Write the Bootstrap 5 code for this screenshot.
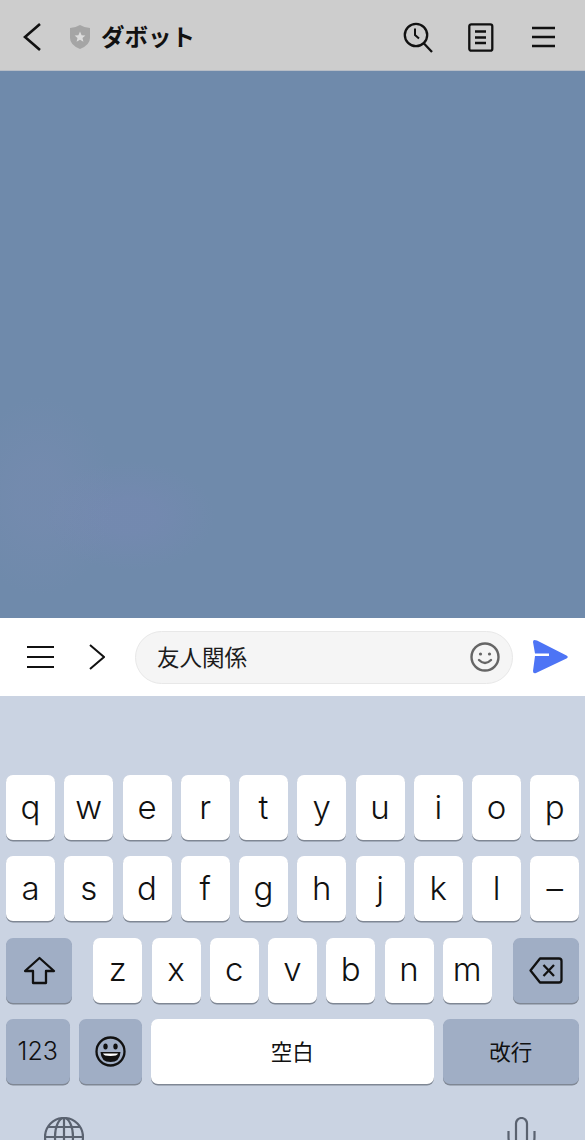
<!DOCTYPE html>
<html lang="ja">
<head>
<meta charset="UTF-8">
<meta name="viewport" content="width=device-width, initial-scale=1.0">
<title>ダボット</title>
<link rel="stylesheet" href="https://cdn.jsdelivr.net/npm/bootstrap@5.3.1/dist/css/bootstrap.min.css">
<style>
    html, body { height: 1140px; overflow: hidden; }
    body { font-family: "Noto Sans CJK JP", "Liberation Sans", sans-serif; background: #cad3e2; color: #111; }
    .top-bar { height: 71px; background: #cdcdcd; border-bottom: 1px solid #b7bdc6; padding: 4px 30px 0 21px; }
    .chat-title { font-size: 23.5px; font-weight: 700; line-height: 1; margin-left: 10px; color: #111; }
    .chat-area {
        height: 547px;
        background-color: #6f8aab;
        background-image:
            radial-gradient(ellipse 75px 100px at 40px 425px, rgba(125,140,180,.3) 30%, transparent 100%),
            radial-gradient(ellipse 85px 55px at 130px 445px, rgba(125,135,185,.3) 30%, transparent 100%);
    }
    .input-bar { height: 78px; background: #fff; padding: 0 17px 0 27px; }
    .msg-box { width: 378px; height: 53px; margin-left: 30px; padding: 0 12px 0 21px; background: #f5f5f5; border: 1px solid #e8e8e8; border-radius: 27px; font-size: 22.5px; color: #1c1c1c; }
    .keyboard { padding: 79px 6px 0; height: 444px; }
    .key-row { height: 65px; margin-bottom: 16.33px; gap: 9.25px; }
    .kb-key { height: 65px; width: 49px; flex: none; border-radius: 7px; background: #fff; box-shadow: 0 1.5px 0 #7f8794; font-family: Inter, "Liberation Sans", sans-serif; font-size: 33px; font-weight: 300; color: #111; }
    .kb-key.alt { background: #a0aec5; }
    .kb-key.shift { width: 66px; margin-right: 12px; }
    .kb-key.del { width: 66px; margin-left: 11.5px; }
    .kb-key.num { width: 63.5px; font-size: 25px; }
    .kb-key.emo { width: 63px; }
    .kb-key.space { width: 282.500px; font-family: "Noto Sans CJK JP", sans-serif; font-size: 21.5px; font-weight: 400; }
    .kb-key.ret { width: 136px; font-family: "Noto Sans CJK JP", sans-serif; font-size: 21.5px; font-weight: 400; }
    .kb-bottom { padding: 17px 43px 0 38px; }
</style>
</head>
<body>
<div class="top-bar d-flex align-items-center">
    <svg width="24" height="30" viewBox="0 0 24 30" fill="none" stroke="#111" stroke-width="2.6"><path d="M19 2 L4 15 L19 28"/></svg>
    <svg class="ms-4" width="22" height="26" viewBox="0 0 22 26"><path d="M1 4 Q6 4 11 1 Q16 4 21 4 V14 Q21 21 11 25 Q1 21 1 14Z" fill="#a5a5a5"/><path d="M11 7.5 L12.6 11.2 L16.4 11.5 L13.5 14 L14.4 17.8 L11 15.8 L7.6 17.8 L8.5 14 L5.6 11.5 L9.4 11.2Z" fill="#dcdcdc"/></svg>
    <span class="chat-title">ダボット</span>
    <div class="ms-auto d-flex align-items-center">
        <svg width="30" height="31" viewBox="0 0 30 31" fill="none" stroke="#111" stroke-width="2.3"><circle cx="13" cy="13" r="11.2"/><path d="M20.5 21 L29 30"/><path d="M12 6.5 V13 L16 16.5" stroke-width="2"/></svg>
        <svg style="margin-left:35px" width="26" height="29" viewBox="0 0 26 29" fill="none" stroke="#111" stroke-width="2.3"><rect x="1.3" y="1.3" width="23" height="26.4" rx="2"/><path d="M7 8.5 H18 M7 14.5 H18 M7 20 H18"/></svg>
        <svg style="margin-left:37px" width="24" height="22" viewBox="0 0 24 22" fill="none" stroke="#111" stroke-width="2.6"><path d="M1 2 H24 M1 11 H24 M1 20 H24"/></svg>
    </div>
</div>

<div class="chat-area"></div>

<div class="input-bar d-flex align-items-center">
    <svg width="27" height="24" viewBox="0 0 27 24" fill="none" stroke="#111" stroke-width="2.2"><path d="M0 2 H27 M0 12 H27 M0 22 H27"/></svg>
    <svg style="margin-left:35px" width="16" height="26" viewBox="0 0 16 26" fill="none" stroke="#111" stroke-width="2"><path d="M1 1 L15 13 L1 25"/></svg>
    <div class="msg-box d-flex align-items-center justify-content-between">
        <span>友人関係</span>
        <svg width="30" height="30" viewBox="0 0 30 30" fill="none" stroke="#666" stroke-width="2.4"><circle cx="15" cy="15" r="13.5"/><path d="M9 18 Q15 24 21 18" stroke-linecap="round"/><circle cx="10.5" cy="12" r="1.6" fill="#666" stroke="none"/><circle cx="19.5" cy="12" r="1.6" fill="#666" stroke="none"/></svg>
    </div>
    <svg class="ms-auto" width="36" height="36" viewBox="0 0 36 36"><path d="M2.5 1 Q1 1 1 3 L3 14.5 H17 V17 H3 L1 32 Q1 35 4 34 L34.500 19.500 Q37 18 34.500 16.500 L5 1.500 Q3.500 1 2.500 1Z" fill="#4d74f5"/></svg>
</div>

<div class="keyboard">
    <div class="key-row d-flex">
        <div class="kb-key d-flex align-items-center justify-content-center">q</div>
        <div class="kb-key d-flex align-items-center justify-content-center">w</div>
        <div class="kb-key d-flex align-items-center justify-content-center">e</div>
        <div class="kb-key d-flex align-items-center justify-content-center">r</div>
        <div class="kb-key d-flex align-items-center justify-content-center">t</div>
        <div class="kb-key d-flex align-items-center justify-content-center">y</div>
        <div class="kb-key d-flex align-items-center justify-content-center">u</div>
        <div class="kb-key d-flex align-items-center justify-content-center">i</div>
        <div class="kb-key d-flex align-items-center justify-content-center">o</div>
        <div class="kb-key d-flex align-items-center justify-content-center">p</div>
    </div>
    <div class="key-row d-flex">
        <div class="kb-key d-flex align-items-center justify-content-center">a</div>
        <div class="kb-key d-flex align-items-center justify-content-center">s</div>
        <div class="kb-key d-flex align-items-center justify-content-center">d</div>
        <div class="kb-key d-flex align-items-center justify-content-center">f</div>
        <div class="kb-key d-flex align-items-center justify-content-center">g</div>
        <div class="kb-key d-flex align-items-center justify-content-center">h</div>
        <div class="kb-key d-flex align-items-center justify-content-center">j</div>
        <div class="kb-key d-flex align-items-center justify-content-center">k</div>
        <div class="kb-key d-flex align-items-center justify-content-center">l</div>
        <div class="kb-key d-flex align-items-center justify-content-center">–</div>
    </div>
    <div class="key-row d-flex">
        <div class="kb-key alt shift d-flex align-items-center justify-content-center">
            <svg width="33" height="29" viewBox="0 0 33 29" fill="none" stroke="#111" stroke-width="2.300" stroke-linejoin="round"><path d="M16.500 2 L31 15 H23 V27 H10 V15 H2Z"/></svg>
        </div>
        <div class="kb-key d-flex align-items-center justify-content-center">z</div>
        <div class="kb-key d-flex align-items-center justify-content-center">x</div>
        <div class="kb-key d-flex align-items-center justify-content-center">c</div>
        <div class="kb-key d-flex align-items-center justify-content-center">v</div>
        <div class="kb-key d-flex align-items-center justify-content-center">b</div>
        <div class="kb-key d-flex align-items-center justify-content-center">n</div>
        <div class="kb-key d-flex align-items-center justify-content-center">m</div>
        <div class="kb-key alt del d-flex align-items-center justify-content-center">
            <svg width="34" height="27" viewBox="0 0 34 27" fill="none" stroke="#111" stroke-width="2.300" stroke-linejoin="round"><path d="M11 1.500 H30 Q32.500 1.500 32.500 4 V23 Q32.500 25.500 30 25.500 H11 L1.500 13.500Z"/><path d="M14.500 8 L25 19 M25 8 L14.500 19"/></svg>
        </div>
    </div>
    <div class="key-row d-flex">
        <div class="kb-key alt num d-flex align-items-center justify-content-center">123</div>
        <div class="kb-key alt emo d-flex align-items-center justify-content-center">
            <svg width="31" height="31" viewBox="0 0 31 31"><circle cx="15.500" cy="15.500" r="14" fill="none" stroke="#111" stroke-width="2.300"/><ellipse cx="10.500" cy="10.500" rx="2.200" ry="3" fill="#111"/><ellipse cx="20.500" cy="10.500" rx="2.200" ry="3" fill="#111"/><path d="M5.500 16 H25.500 Q25 26 15.500 26 Q6 26 5.500 16Z" fill="#111"/><path d="M8 17.500 H23 Q22.500 20 15.500 20 Q8.500 20 8 17.500Z" fill="#fff"/></svg>
        </div>
        <div class="kb-key space d-flex align-items-center justify-content-center">空白</div>
        <div class="kb-key alt ret d-flex align-items-center justify-content-center">改行</div>
    </div>
    <div class="kb-bottom d-flex justify-content-between">
        <svg width="40" height="40" viewBox="0 0 40 40" fill="none" stroke="#5a6270" stroke-width="2.200"><circle cx="20" cy="20" r="19"/><ellipse cx="20" cy="20" rx="9" ry="19"/><path d="M20 1 V39 M1 20 H39 M4 10 H36"/></svg>
        <svg width="29" height="40" viewBox="0 0 29 40" fill="none" stroke="#5a6270" stroke-width="2.200"><rect x="9" y="1" width="11" height="30" rx="5.500"/><path d="M1.500 14 V20 Q1.500 33 14.500 33 Q27.500 33 27.500 20 V14"/></svg>
    </div>
</div>
<script src="https://cdn.jsdelivr.net/npm/bootstrap@5.3.1/dist/js/bootstrap.bundle.min.js"></script>
</body>
</html>
